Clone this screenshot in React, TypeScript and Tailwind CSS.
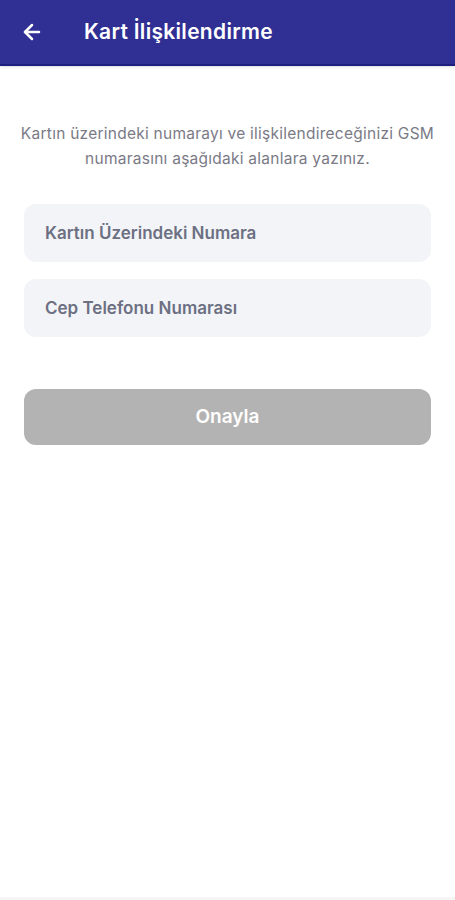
import { ArrowLeft } from "lucide-react"

export default function App() {
  return (
    <div className="flex h-[900px] w-[455px] flex-col bg-white font-['Inter',sans-serif]">
      <header className="flex h-[66px] items-center border-b-2 border-[#1f1f80] bg-[#2f2f94] px-5 shadow-sm">
        <ArrowLeft size={24} strokeWidth={2.5} className="text-white" />
        <h1 className="ml-[40px] text-[21px] font-semibold tracking-[0.3px] text-white">Kart İlişkilendirme</h1>
      </header>

      <main className="flex flex-1 flex-col px-6 pt-[55px]">
        <p className="-mx-6 text-center text-[15.5px] leading-[25px] tracking-[0.25px] text-[#7a7a86]">
          Kartın üzerindeki numarayı ve ilişkilendireceğinizi GSM
          <br />
          numarasını aşağıdaki alanlara yazınız.
        </p>

        <div className="mt-[33px] flex flex-col gap-[17px]">
          <input
            placeholder="Kartın Üzerindeki Numara"
            className="h-[58px] rounded-[12px] bg-[#f3f4f8] px-[21px] text-[17px] font-semibold tracking-[0px] text-[#4b4f60] outline-none placeholder:text-[#6c7082]"
          />
          <input
            placeholder="Cep Telefonu Numarası"
            className="h-[58px] rounded-[12px] bg-[#f3f4f8] px-[21px] text-[17px] font-semibold tracking-[0px] text-[#4b4f60] outline-none placeholder:text-[#6c7082]"
          />
        </div>

        <button
          disabled
          className="mt-[52px] h-[56px] rounded-[12px] bg-[#b3b3b3] text-[19px] font-semibold text-white"
        >
          Onayla
        </button>
      </main>

      <div className="h-[3px] bg-[#f5f5f5]" />
    </div>
  )
}
